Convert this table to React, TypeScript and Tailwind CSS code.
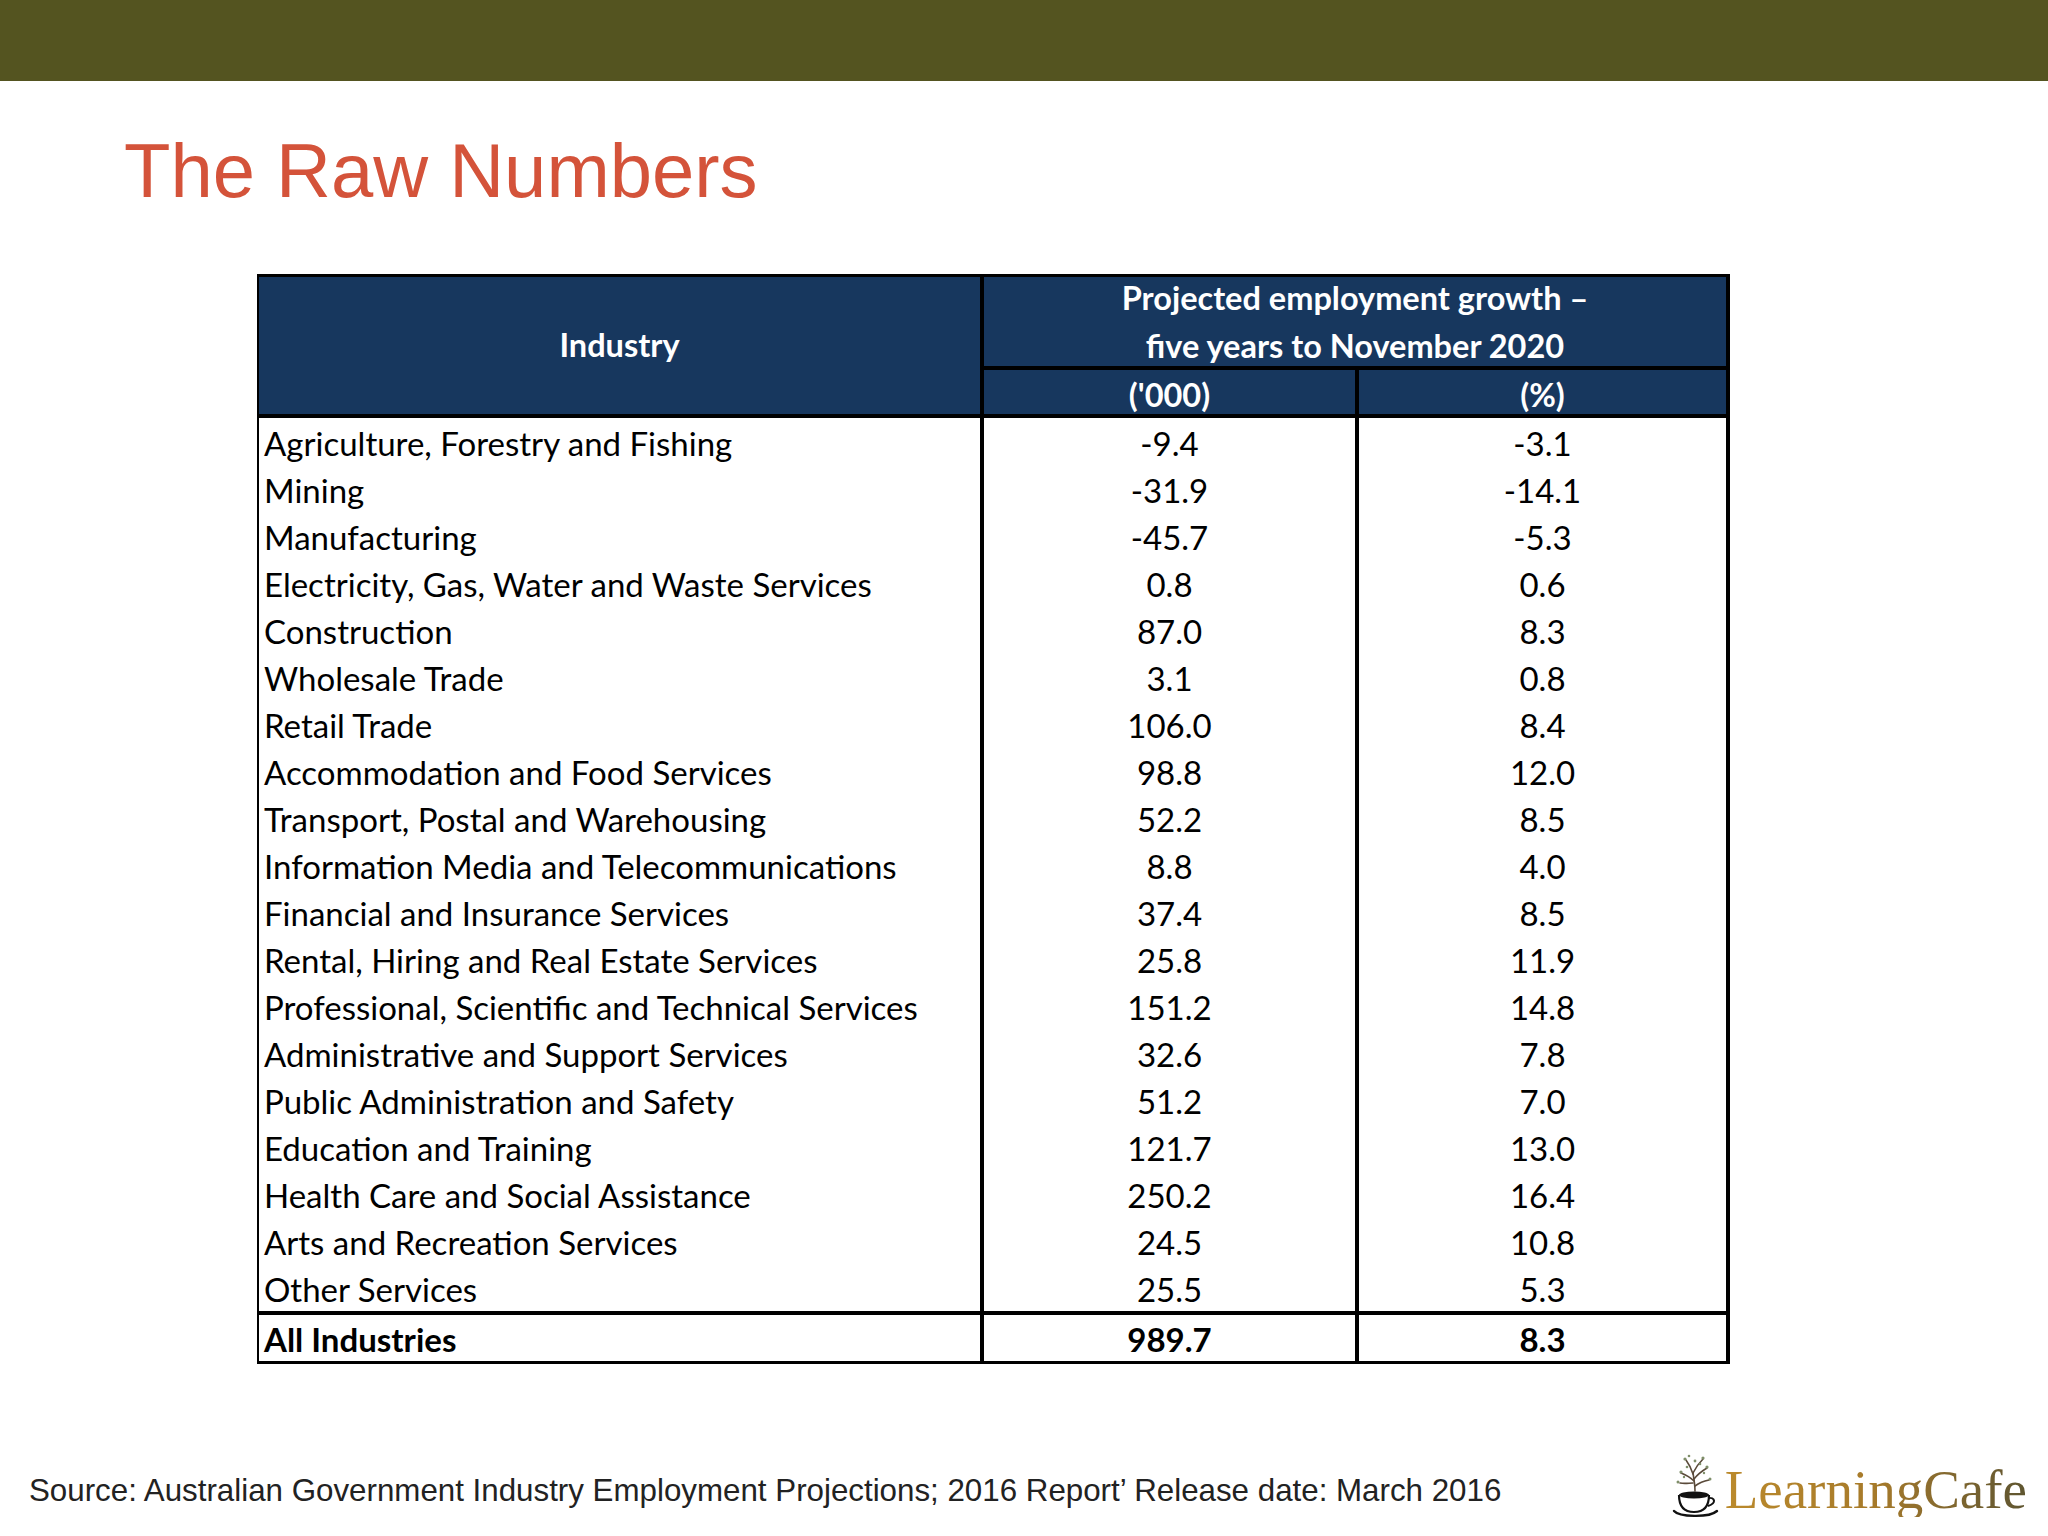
import React from "react";

const rows: [string, string, string][] = [
  ["Agriculture, Forestry and Fishing", "-9.4", "-3.1"],
  ["Mining", "-31.9", "-14.1"],
  ["Manufacturing", "-45.7", "-5.3"],
  ["Electricity, Gas, Water and Waste Services", "0.8", "0.6"],
  ["Construction", "87.0", "8.3"],
  ["Wholesale Trade", "3.1", "0.8"],
  ["Retail Trade", "106.0", "8.4"],
  ["Accommodation and Food Services", "98.8", "12.0"],
  ["Transport, Postal and Warehousing", "52.2", "8.5"],
  ["Information Media and Telecommunications", "8.8", "4.0"],
  ["Financial and Insurance Services", "37.4", "8.5"],
  ["Rental, Hiring and Real Estate Services", "25.8", "11.9"],
  ["Professional, Scientific and Technical Services", "151.2", "14.8"],
  ["Administrative and Support Services", "32.6", "7.8"],
  ["Public Administration and Safety", "51.2", "7.0"],
  ["Education and Training", "121.7", "13.0"],
  ["Health Care and Social Assistance", "250.2", "16.4"],
  ["Arts and Recreation Services", "24.5", "10.8"],
  ["Other Services", "25.5", "5.3"],
];

function CupLogo() {
  return (
    <svg width="54" height="66" viewBox="0 0 54 66">
      <g stroke="#5a4a3a" strokeWidth="1.6" fill="none" strokeLinecap="round">
        <path d="M24 38 C24 32 23 26 22 20" />
        <path d="M23 28 C19 24 15 22 10 20" />
        <path d="M23 26 C27 21 31 18 36 15" />
        <path d="M22 21 C20 15 18 11 15 7" />
        <path d="M22 20 C25 14 28 10 32 6" />
        <path d="M24 33 C28 30 33 28 38 27" />
        <path d="M22 30 C18 30 14 31 9 30" />
      </g>
      <g fill="#7f8f6a">
        <circle cx="10" cy="19" r="1.6" />
        <circle cx="7" cy="29" r="1.5" />
        <circle cx="14" cy="6" r="1.6" />
        <circle cx="18" cy="3" r="1.3" />
        <circle cx="24" cy="8" r="1.4" />
        <circle cx="32" cy="5" r="1.6" />
        <circle cx="36" cy="14" r="1.6" />
        <circle cx="39" cy="26" r="1.5" />
        <circle cx="29" cy="11" r="1.3" />
        <circle cx="16" cy="14" r="1.3" />
        <circle cx="33" cy="20" r="1.2" />
        <circle cx="13" cy="24" r="1.2" />
      </g>
      <ellipse cx="23" cy="42" rx="15" ry="3.5" fill="#111" />
      <path d="M8 42 C8 54 14 59 23 59 C32 59 38 54 38 42" fill="none" stroke="#111" strokeWidth="2.2" />
      <path d="M37 45 C44 44 46 50 37 53" fill="none" stroke="#111" strokeWidth="2" />
      <path d="M3 58 C8 64 38 65 46 58" fill="none" stroke="#111" strokeWidth="2.4" strokeLinecap="round" />
    </svg>
  );
}

export default function App() {
  const dataFont = { fontFamily: "Lato, 'Open Sans', sans-serif" };
  return (
    <div className="w-[2048px] h-[1536px] bg-white flex flex-col overflow-hidden">
      <div className="h-[81px] bg-[#545420] shrink-0" />
      <h1
        className="mt-[52px] pl-[124px] text-[76px] leading-none text-[#d4533a]"
        style={{ fontFamily: "'Liberation Sans', Arial, sans-serif" }}
      >
        The Raw Numbers
      </h1>

      <div className="mt-[65px] ml-[257px] w-[1473px] border-t-[3px] border-l-2 border-r-4 border-b-[3px] border-black" style={dataFont}>
        <div className="flex bg-[#17375e] text-white font-bold text-[32.5px]">
          <div className="w-[725px] h-[141px] border-r-4 border-b-4 border-black flex items-center justify-center">
            Industry
          </div>
          <div className="flex flex-col">
            <div className="h-[93px] border-b-4 border-black flex flex-col items-center justify-center leading-[48px] w-[742px]">
              <div>Projected employment growth –</div>
              <div>five years to November 2020</div>
            </div>
            <div className="flex h-[48px] border-b-4 border-black pt-[6px]">
              <div className="w-[375px] border-r-4 border-black -mt-[6px] pt-[6px] flex items-center justify-center">('000)</div>
              <div className="w-[367px] flex items-center justify-center">(%)</div>
            </div>
          </div>
        </div>
        {rows.map(([name, a, b]) => (
          <div key={name} className="flex h-[47px] text-[33px] text-black">
            <div className="w-[725px] border-r-4 border-black flex items-center pt-[5px] pl-[5px] whitespace-nowrap">{name}</div>
            <div className="w-[375px] border-r-4 border-black flex items-center justify-center pt-[5px]">{a}</div>
            <div className="w-[367px] flex items-center justify-center pt-[5px]">{b}</div>
          </div>
        ))}
        <div className="flex h-[50px] text-[33px] font-bold text-black border-t-4 border-black">
          <div className="w-[725px] border-r-4 border-black flex items-center pl-[5px] pt-[3px]">All Industries</div>
          <div className="w-[375px] border-r-4 border-black flex items-center justify-center pt-[3px]">989.7</div>
          <div className="w-[367px] flex items-center justify-center pt-[3px]">8.3</div>
        </div>
      </div>

      <div className="mt-[73px] h-[96px] flex justify-between items-start">
        <div
          className="mt-[38px] ml-[29px] text-[31.3px] leading-none text-[#222]"
          style={{ fontFamily: "'Liberation Sans', Arial, sans-serif" }}
        >
          Source: Australian Government Industry Employment Projections; 2016 Report’ Release date: March 2016
        </div>
        <div className="flex items-start mr-[21px] mt-[16px]">
          <CupLogo />
          <div
            className="text-[55px] leading-none mt-[9px] bg-gradient-to-r from-[#bb8a2c] via-[#a67a2a] to-[#5e5530] bg-clip-text text-transparent"
            style={{ fontFamily: "'Liberation Serif', 'Times New Roman', serif" }}
          >
            LearningCafe
          </div>
        </div>
      </div>
    </div>
  );
}
